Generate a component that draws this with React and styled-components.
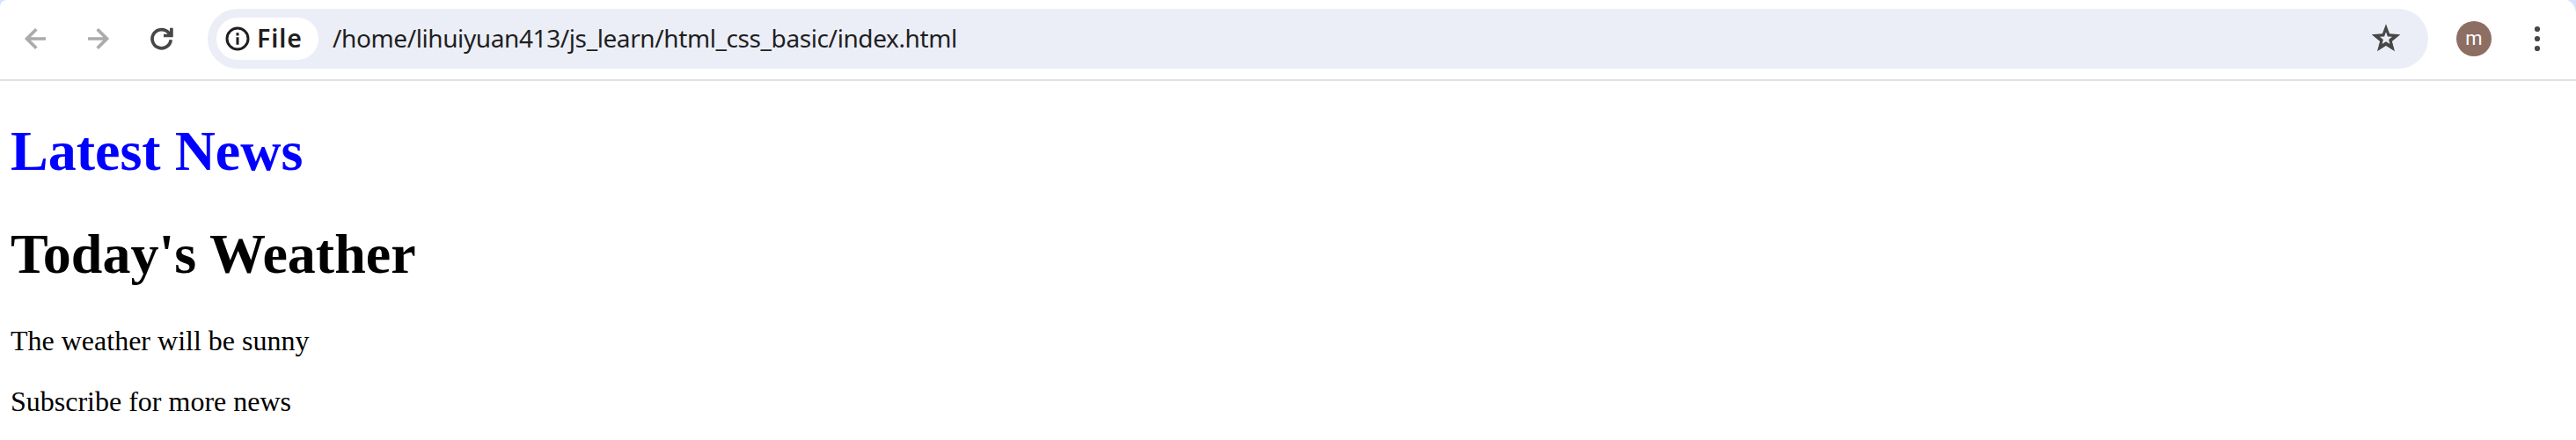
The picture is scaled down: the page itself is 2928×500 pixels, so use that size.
import React from "react";
import styled, { createGlobalStyle } from "styled-components";

const GlobalStyle = createGlobalStyle`
  html, body { margin: 0; padding: 0; background: #fff; }
`;

const Frame = styled.div`
  background: #d3e3fd;
`;

const Window = styled.div`
  height: 500px;
  overflow: hidden;
  background: #fff;
  border-radius: 8px 12px 0 0 / 8px 16px 0 0;
`;

const Toolbar = styled.header`
  display: flex;
  align-items: center;
  box-sizing: border-box;
  height: 92px;
  padding: 0 24px 2px 20px;
  border-bottom: 2px solid #e1e1e1;
  font-family: "Noto Sans", "Liberation Sans", sans-serif;
  color: #1f1f1f;
`;

const Navigation = styled.nav`
  display: flex;
  gap: 32px;
  margin-right: 32px;
`;

const IconButton = styled.button`
  display: flex;
  padding: 0;
  border: 0;
  background: none;
  color: ${({ $muted }) => ($muted ? "#ababab" : "#474747")};
`;

const AddressBar = styled.div`
  display: flex;
  align-items: center;
  box-sizing: border-box;
  flex: 1;
  height: 68px;
  padding: 0 26px 0 10px;
  border-radius: 34px;
  background: #ebeef7;
`;

const SchemeChip = styled.div`
  display: flex;
  align-items: center;
  gap: 2px;
  box-sizing: border-box;
  width: 116px;
  height: 48px;
  padding-left: 4px;
  border-radius: 24px;
  background: #fff;
`;

const SchemeLabel = styled.span`
  padding-bottom: 2px;
  font-size: 28.5px;
  font-weight: 600;
  line-height: 40px;
  letter-spacing: 0.9px;
`;

const Address = styled.span`
  flex: 1;
  margin-left: 16px;
  padding-bottom: 2px;
  font-size: 28px;
  line-height: 40px;
  letter-spacing: -0.4px;
  white-space: nowrap;
`;

const Avatar = styled.div`
  display: flex;
  align-items: center;
  justify-content: center;
  width: 40px;
  height: 40px;
  margin: 0 32px;
  border-radius: 50%;
  background: #8d6e63;
  color: #fff;
  font: 22px/38px Roboto, sans-serif;
`;

const Page = styled.main`
  display: flow-root;
  padding: 0 12px;
  font-family: "Liberation Serif", serif;
  font-size: 32px;
  color: #000;
`;

const Headline = styled.h1`
  margin: 0.67em 0;
  font-size: 64px;
  font-weight: 700;
  line-height: normal;
  color: ${({ $color }) => $color || "inherit"};
`;

const Paragraph = styled.p`
  margin: 32px 0;
`;

const Icon = ({ size = 40, children }) => (
  <svg width={size} height={size} viewBox={`0 0 ${size} ${size}`} fill="none" stroke="currentColor" strokeWidth="3.7">
    {children}
  </svg>
);

const BackIcon = () => (
  <Icon><path d="M32 20H11M21.3 9.2 10.5 20l10.8 10.8" /></Icon>
);
const ForwardIcon = () => (
  <Icon><path d="M8 20h21M18.7 9.2 29.5 20 18.7 30.8" /></Icon>
);
const ReloadIcon = () => (
  <Icon><path d="M30.2 21.2A10.6 10.6 0 1 1 27.9 13.5L30.5 16.4M30.9 7.7v8.8H22" /></Icon>
);
const InfoIcon = () => (
  <Icon>
    <circle cx="20" cy="20" r="12" strokeWidth="3" />
    <path d="M20 18.2v8.6M20 13.3v3.2" strokeWidth="3" />
  </Icon>
);
const StarIcon = () => (
  <Icon size={44}>
    <path
      fill="currentColor"
      stroke="none"
      fillRule="evenodd"
      d="M22 5.3 26.1 16.3 38.3 17.2 28.9 24.9 32 36.2 22 29.9 12 36.2 15.1 24.9 5.7 17.2 17.9 16.3ZM22 14.2 23.9 19.4 29 19.8 25.1 23 26.4 28 22 25.2 17.6 28 18.9 23 15 19.8 20.1 19.4Z"
    />
  </Icon>
);
const MenuIcon = () => (
  <Icon>
    <g fill="currentColor" stroke="none">
      <circle cx="20" cy="9" r="3.1" /><circle cx="20" cy="20" r="3.1" /><circle cx="20" cy="31" r="3.1" />
    </g>
  </Icon>
);

export default function App() {
  return (
    <Frame>
      <GlobalStyle />
      <Window>
        <Toolbar>
          <Navigation>
            <IconButton $muted aria-label="Back"><BackIcon /></IconButton>
            <IconButton $muted aria-label="Forward"><ForwardIcon /></IconButton>
            <IconButton aria-label="Reload"><ReloadIcon /></IconButton>
          </Navigation>
          <AddressBar>
            <SchemeChip><InfoIcon /><SchemeLabel>File</SchemeLabel></SchemeChip>
            <Address>/home/lihuiyuan413/js_learn/html_css_basic/index.html</Address>
            <IconButton aria-label="Bookmark"><StarIcon /></IconButton>
          </AddressBar>
          <Avatar>m</Avatar>
          <IconButton aria-label="Menu"><MenuIcon /></IconButton>
        </Toolbar>
        <Page>
          <Headline $color="#00f">Latest News</Headline>
          <Headline>Today's Weather</Headline>
          <Paragraph>The weather will be sunny</Paragraph>
          <Paragraph>Subscribe for more news</Paragraph>
        </Page>
      </Window>
    </Frame>
  );
}
